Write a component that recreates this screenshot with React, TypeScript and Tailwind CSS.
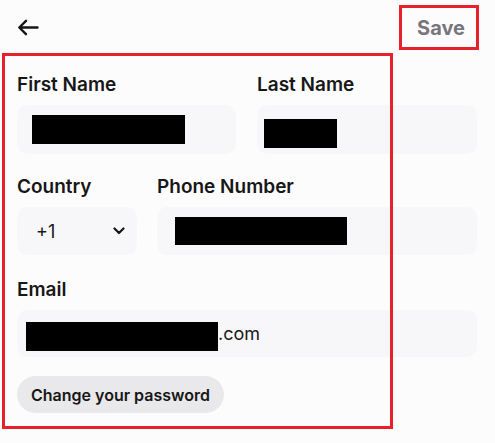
import React from "react";

const font = { fontFamily: "Inter, 'Noto Sans', sans-serif" };

function BackArrow() {
  return (
    <svg width="22" height="17" viewBox="0 0 22 17" fill="none">
      <path
        d="M20.5 8.5H2.5M9 1.8L2.3 8.5L9 15.2"
        stroke="#161616"
        strokeWidth="2.4"
        strokeLinecap="round"
        strokeLinejoin="round"
      />
    </svg>
  );
}

function Chevron() {
  return (
    <svg width="12" height="8" viewBox="0 0 12 8" fill="none">
      <path
        d="M1.5 1.5L6 6L10.5 1.5"
        stroke="#161616"
        strokeWidth="2.2"
        strokeLinecap="round"
        strokeLinejoin="round"
      />
    </svg>
  );
}

function Label({ children }: { children: React.ReactNode }) {
  return (
    <div className="text-[19px] leading-[24px] font-semibold text-[#171717] mb-2">
      {children}
    </div>
  );
}

export default function App() {
  return (
    <div
      className="relative w-[495px] h-[443px] bg-[#fdfcfd] overflow-hidden"
      style={font}
    >
      <header className="h-[55px] flex items-center justify-between pl-[17px] pr-[16px]">
        <button className="flex items-center">
          <BackArrow />
        </button>
        <button className="w-[80px] h-[45px] border-[3px] border-[#e8202a] flex items-center justify-center pl-[4px] text-[20px] font-bold text-[#77767b]">
          Save
        </button>
      </header>

      <div className="px-[17px] pt-[18px] w-[494px]">
        <div className="grid grid-cols-[219px_220px] gap-x-[21px]">
          <div>
            <Label>First Name</Label>
            <div className="h-[49px] rounded-[10px] bg-[#f7f6f9] flex items-center pl-[15px]">
              <div className="w-[153px] h-[29px] bg-black" />
            </div>
          </div>
          <div>
            <Label>Last Name</Label>
            <div className="h-[49px] rounded-[10px] bg-[#f7f6f9] flex items-center pl-[7px] pt-[8px]">
              <div className="w-[73px] h-[29px] bg-black" />
            </div>
          </div>
        </div>

        <div className="grid grid-cols-[120px_320px] gap-x-[20px] mt-[21px]">
          <div>
            <Label>Country</Label>
            <div className="h-[48px] rounded-[10px] bg-[#f7f6f9] flex items-center justify-between pl-[19px] pr-[12px] text-[18px] text-[#1a1a1a]">
              <span>+1</span>
              <Chevron />
            </div>
          </div>
          <div>
            <Label>Phone Number</Label>
            <div className="h-[48px] rounded-[10px] bg-[#f7f6f9] flex items-center pl-[18px]">
              <div className="w-[172px] h-[28px] bg-black" />
            </div>
          </div>
        </div>

        <div className="mt-[23px]">
          <Label>Email</Label>
          <div className="h-[47px] rounded-[10px] bg-[#f7f6f9] flex items-center pl-[9px] pt-[5px] text-[18px] text-[#1a1a1a]">
            <div className="w-[192px] h-[29px] bg-black" />
            <span className="-mt-[5px]">.com</span>
          </div>
        </div>

        <button className="mt-[19px] h-[37px] px-[14px] rounded-full bg-[#e9e8ea] text-[16px] font-semibold text-[#171717]">
          Change your password
        </button>
      </div>

      <div className="absolute left-[2px] top-[53px] w-[391px] h-[376px] border-[3px] border-[#e8202a] pointer-events-none" />
    </div>
  );
}
